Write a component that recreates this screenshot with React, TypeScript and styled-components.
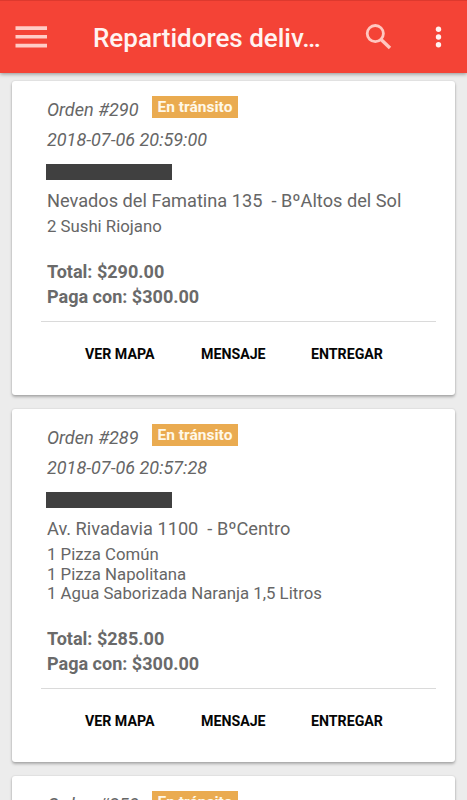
import React from "react";
import styled, { createGlobalStyle } from "styled-components";

const Global = createGlobalStyle`
  * { box-sizing: border-box; }
  body { margin: 0; background: #ececec; font-family: Roboto, sans-serif; overflow: hidden; }
`;

const Screen = styled.div`
  width: 467px;
  height: 800px;
  overflow: hidden;
  display: flex;
  flex-direction: column;
`;

const AppBar = styled.header`
  height: 73px;
  flex: none;
  display: flex;
  align-items: center;
  padding: 2px 0 0 15px;
  border-top: 1px solid #dd392e;
  background: #f44336;
  box-shadow: 0 1px 4px rgba(0, 0, 0, 0.4);
  z-index: 1;
  svg { display: block; flex: none; }
`;

const Title = styled.h1`
  margin: 0 0 0 46px;
  padding-bottom: 1px;
  width: 271px;
  font-size: 26px;
  font-weight: 500;
  color: #fff3f1;
  white-space: nowrap;
`;

const Feed = styled.main`
  display: flex;
  flex-direction: column;
  gap: 14.2px;
  padding: 7.8px 12px 0 12px;
`;

const Card = styled.article<{ $height: number }>`
  flex: none;
  height: ${(p) => p.$height}px;
  padding: 14px 19px 0 29px;
  background: #fff;
  border-radius: 3px;
  box-shadow: 0 2px 3px rgba(0, 0, 0, 0.27), 0 0 2px rgba(0, 0, 0, 0.14);
  color: #666;
  white-space: pre;
`;

const Info = styled.div`
  padding-left: 6px;
`;

const OrderRow = styled.div`
  display: flex;
  height: 30px;
  align-items: flex-start;
`;

const OrderName = styled.span`
  width: 105px;
  font-size: 18.1px;
  line-height: 30px;
  font-style: italic;
`;

const Badge = styled.span`
  width: 86px;
  height: 22px;
  margin-top: 1px;
  background: #eaab50;
  color: #fff8e8;
  font-size: 15.5px;
  font-weight: 700;
  line-height: 23px;
  text-align: center;
`;

const Stamp = styled.div`
  font-size: 18px;
  line-height: 30px;
  font-style: italic;
`;

const Redacted = styled.div`
  width: 126px;
  height: 16px;
  margin: 9.5px 0 8.5px -1px;
  background: #404040;
`;

const Address = styled.div`
  font-size: 18.2px;
  line-height: 24px;
`;

const Items = styled.div`
  margin: 4.5px 0 22px;
  font-size: 16.75px;
  line-height: 19.5px;
`;

const Amount = styled.div`
  color: #6a6a6a;
  font-size: 18.05px;
  font-weight: 700;
  line-height: 25px;
`;

const Actions = styled.footer`
  display: flex;
  margin-top: 12px;
  padding: 20px 0 0 44px;
  border-top: 1px solid #dadada;
`;

const Action = styled.button<{ $width: number }>`
  width: ${(p) => p.$width}px;
  padding: 0;
  border: 0;
  background: none;
  color: #050505;
  font: 700 14.2px/24px Roboto, sans-serif;
  text-align: left;
`;

interface Order {
  id: number;
  date: string;
  address: string;
  items: string[];
  total: string;
  pays: string;
  height: number;
}

const orders: Order[] = [
  { id: 290, date: "2018-07-06 20:59:00", address: "Nevados del Famatina 135  - BºAltos del Sol", items: ["2 Sushi Riojano"], total: "$290.00", pays: "$300.00", height: 314 },
  { id: 289, date: "2018-07-06 20:57:28", address: "Av. Rivadavia 1100  - BºCentro", items: ["1 Pizza Común", "1 Pizza Napolitana", "1 Agua Saborizada Naranja 1,5 Litros"], total: "$285.00", pays: "$300.00", height: 353 },
];

const OrderHeader = ({ id }: { id: number }) => (
  <OrderRow>
    <OrderName>Orden #{id}</OrderName>
    <Badge>En tránsito</Badge>
  </OrderRow>
);

export default function App() {
  return (
    <Screen>
      <Global />
      <AppBar>
        <svg width="32" height="24" viewBox="0 0 32 24" fill="#ffccc6">
          <path d="M.5 .3H32v3.6H.5zM.5 9H32v3.6H.5zM.5 17.8H32v3.6H.5z" />
        </svg>
        <Title>Repartidores deliv…</Title>
        <svg width="28" height="28" viewBox="0 0 28 28" fill="none" stroke="#ffc7c0" strokeWidth="2.8">
          <circle cx="11.3" cy="9.6" r="8.1" />
          <path d="M16.8 15.3l9.2 8.7" strokeWidth="3.4" />
        </svg>
        <svg width="70" height="28" viewBox="0 0 70 28" fill="#fff3f1">
          <circle cx="46.5" cy="5.3" r="2.7" />
          <circle cx="46.5" cy="13" r="2.7" />
          <circle cx="46.5" cy="20.7" r="2.7" />
        </svg>
      </AppBar>
      <Feed>
        {orders.map((o) => (
          <Card key={o.id} $height={o.height}>
            <Info>
              <OrderHeader id={o.id} />
              <Stamp>{o.date}</Stamp>
              <Redacted />
              <Address>{o.address}</Address>
              <Items>{o.items.map((i) => <div key={i}>{i}</div>)}</Items>
              <Amount>Total: {o.total}</Amount>
              <Amount>Paga con: {o.pays}</Amount>
            </Info>
            <Actions>
              <Action $width={116}>VER MAPA</Action>
              <Action $width={110}>MENSAJE</Action>
              <Action $width={80}>ENTREGAR</Action>
            </Actions>
          </Card>
        ))}
        <Card $height={314}>
          <Info><OrderHeader id={258} /></Info>
        </Card>
      </Feed>
    </Screen>
  );
}
